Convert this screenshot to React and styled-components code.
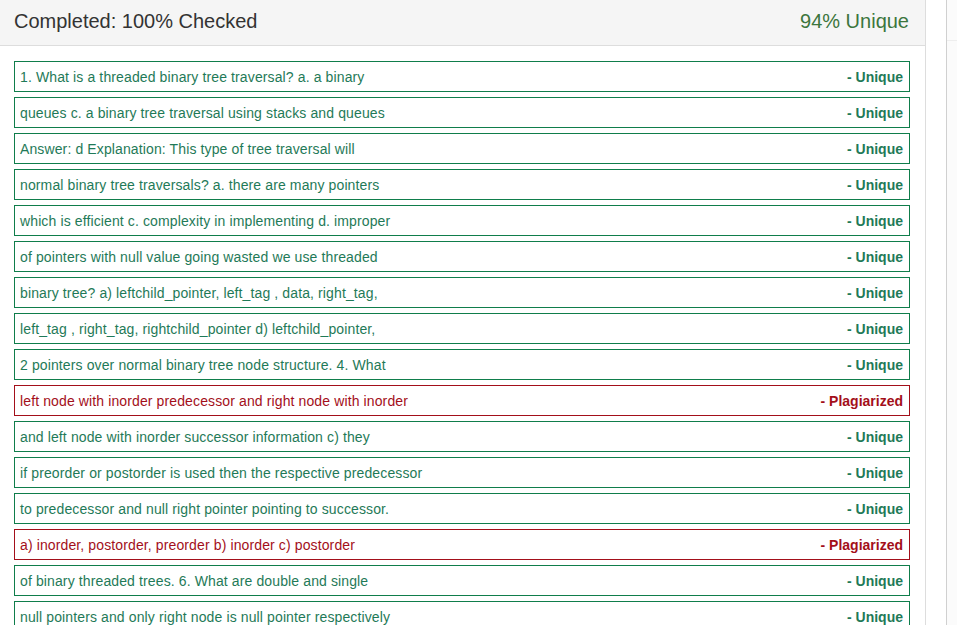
import React from 'react';
import styled, { createGlobalStyle } from 'styled-components';

const GlobalStyle = createGlobalStyle`
	html, body {
		margin: 0;
		padding: 0;
		background: #fff;
		font-family: 'Liberation Sans', Arial, Helvetica, sans-serif;
	}
`;

const rows = [
	{ text: '1. What is a threaded binary tree traversal? a. a binary', plag: false },
	{ text: 'queues c. a binary tree traversal using stacks and queues', plag: false },
	{ text: 'Answer: d Explanation: This type of tree traversal will', plag: false },
	{ text: 'normal binary tree traversals? a. there are many pointers', plag: false },
	{ text: 'which is efficient c. complexity in implementing d. improper', plag: false },
	{ text: 'of pointers with null value going wasted we use threaded', plag: false },
	{ text: 'binary tree? a) leftchild_pointer, left_tag , data, right_tag,', plag: false },
	{ text: 'left_tag , right_tag, rightchild_pointer d) leftchild_pointer,', plag: false },
	{ text: '2 pointers over normal binary tree node structure. 4. What', plag: false },
	{ text: 'left node with inorder predecessor and right node with inorder', plag: true },
	{ text: 'and left node with inorder successor information c) they', plag: false },
	{ text: 'if preorder or postorder is used then the respective predecessor', plag: false },
	{ text: 'to predecessor and null right pointer pointing to successor.', plag: false },
	{ text: 'a) inorder, postorder, preorder b) inorder c) postorder', plag: true },
	{ text: 'of binary threaded trees. 6. What are double and single', plag: false },
	{ text: 'null pointers and only right node is null pointer respectively', plag: false },
];

const App = () => {
	return (
		<>
			<GlobalStyle />
			<Page>
				<Panel>
					<Heading>
						<Title>Completed: 100% Checked</Title>
						<Score>94% Unique</Score>
					</Heading>
					<Body>
						{rows.map((r, i) => (
							<Row key={i} plag={r.plag ? 1 : 0}>
								<RowText>{r.text}</RowText>
								<Verdict>{r.plag ? '- Plagiarized' : '- Unique'}</Verdict>
							</Row>
						))}
					</Body>
				</Panel>
				<Side>
					<SideHead />
				</Side>
			</Page>
		</>
	);
};

const Page = styled.div`
	display: flex;
	height: 625px;
	overflow: hidden;
	gap: 20px;
`;

const Panel = styled.div`
	width: 925px;
	flex-shrink: 0;
	border-right: 1px solid #dddddd;
	background: #fff;
`;

const Heading = styled.div`
	display: flex;
	justify-content: space-between;
	align-items: center;
	height: 46px;
	padding: 0 16px 3px 14px;
	background: #f5f5f5;
	border-bottom: 1px solid #dddddd;
	box-sizing: border-box;
	font-size: 20px;
`;

const Title = styled.div`
	color: #333333;
`;

const Score = styled.div`
	color: #3c763d;
`;

const Body = styled.div`
	display: flex;
	flex-direction: column;
	gap: 5px;
	padding: 15px 15px 0 14px;
`;

const Row = styled.div`
	display: flex;
	justify-content: space-between;
	align-items: center;
	height: 31px;
	box-sizing: border-box;
	padding: 0 6px 0 5px;
	border: 1px solid ${({ plag }) => (plag ? '#a30f1a' : '#0f7d4b')};
	color: ${({ plag }) => (plag ? '#a30f1a' : '#1f7a58')};
	font-size: 14px;
	flex-shrink: 0;
`;

const RowText = styled.span`
	white-space: nowrap;
	letter-spacing: 0.12px;
`;

const Verdict = styled.span`
	font-weight: bold;
	white-space: nowrap;
`;

const Side = styled.div`
	flex: 1;
	border-left: 1px solid #d0d0d0;
	background: #fbfbfb;
`;

const SideHead = styled.div`
	height: 40px;
	border-bottom: 1px solid #eeeeee;
`;

export default App;
